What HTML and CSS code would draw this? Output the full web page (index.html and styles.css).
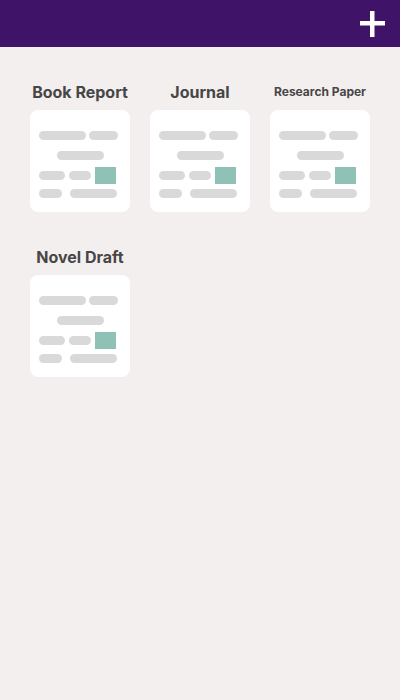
FILE: index.html
```html
<!DOCTYPE html>
<html lang="en">
<head>
<meta charset="utf-8">
<title>Documents</title>
<link rel="stylesheet" href="styles.css">
</head>
<body>
<header class="topbar">
  <button class="add-btn" aria-label="Add">
    <svg width="25" height="26" viewBox="0 0 25 26"><rect x="0" y="10" width="25" height="4.5" fill="#fff"/><rect x="10" y="0" width="4.5" height="26" fill="#fff"/></svg>
  </button>
</header>
<main class="grid">
  <div class="doc">
    <div class="doc-title">Book Report</div>
    <div class="card">
      <div class="row r1"><span class="pill w47"></span><span class="pill w29"></span></div>
      <div class="row r2"><span class="pill w47"></span></div>
      <div class="row r3"><span class="pill w26"></span><span class="pill w22"></span><span class="sq"></span></div>
      <div class="row r4"><span class="pill w23"></span><span class="pill w47"></span></div>
    </div>
  </div>
  <div class="doc">
    <div class="doc-title">Journal</div>
    <div class="card">
      <div class="row r1"><span class="pill w47"></span><span class="pill w29"></span></div>
      <div class="row r2"><span class="pill w47"></span></div>
      <div class="row r3"><span class="pill w26"></span><span class="pill w22"></span><span class="sq"></span></div>
      <div class="row r4"><span class="pill w23"></span><span class="pill w47"></span></div>
    </div>
  </div>
  <div class="doc">
    <div class="doc-title small">Research Paper</div>
    <div class="card">
      <div class="row r1"><span class="pill w47"></span><span class="pill w29"></span></div>
      <div class="row r2"><span class="pill w47"></span></div>
      <div class="row r3"><span class="pill w26"></span><span class="pill w22"></span><span class="sq"></span></div>
      <div class="row r4"><span class="pill w23"></span><span class="pill w47"></span></div>
    </div>
  </div>
  <div class="doc">
    <div class="doc-title">Novel Draft</div>
    <div class="card">
      <div class="row r1"><span class="pill w47"></span><span class="pill w29"></span></div>
      <div class="row r2"><span class="pill w47"></span></div>
      <div class="row r3"><span class="pill w26"></span><span class="pill w22"></span><span class="sq"></span></div>
      <div class="row r4"><span class="pill w23"></span><span class="pill w47"></span></div>
    </div>
  </div>
</main>
</body>
</html>
```
FILE: styles.css
```css
* { box-sizing: border-box; }
html, body { margin: 0; padding: 0; }
body {
  width: 400px;
  height: 700px;
  background: #f3efee;
  font-family: Inter, "Noto Sans", sans-serif;
}
.topbar {
  height: 47px;
  background: #3e1368;
  display: flex;
  justify-content: flex-end;
  align-items: center;
  padding-right: 15px;
}
.add-btn {
  border: 0;
  padding: 0;
  margin: 0;
  background: none;
  width: 25px;
  height: 26px;
  display: block;
}
.add-btn svg { display: block; }
.grid {
  display: grid;
  grid-template-columns: repeat(3, 100px);
  column-gap: 20px;
  row-gap: 35px;
  padding: 35px 30px 0 30px;
}
.doc { display: flex; flex-direction: column; }
.doc-title {
  height: 20px;
  line-height: 20px;
  display: flex;
  justify-content: center;
  align-items: center;
  font-size: 16px;
  font-weight: 700;
  color: #464646;
  white-space: nowrap;
  margin-bottom: 8px;
}
.doc-title.small { font-size: 12px; }
.card {
  width: 100px;
  height: 102px;
  background: #ffffff;
  border-radius: 8px;
  padding-top: 21px;
  display: flex;
  flex-direction: column;
}
.row { display: flex; align-items: center; }
.r1 { margin-left: 9px; gap: 3px; }
.r2 { margin-left: 27px; margin-top: 11px; }
.r3 { margin-left: 9px; margin-top: 7px; gap: 4px; height: 17px; }
.r4 { margin-left: 9px; margin-top: 5px; gap: 8px; }
.pill {
  display: block;
  height: 9px;
  border-radius: 5px;
  background: #d9d9d9;
}
.w47 { width: 47px; }
.w29 { width: 29px; }
.w26 { width: 26px; }
.w22 { width: 22px; }
.w23 { width: 23px; }
.sq {
  display: block;
  width: 21px;
  height: 17px;
  background: #8fc1b7;
}
```
